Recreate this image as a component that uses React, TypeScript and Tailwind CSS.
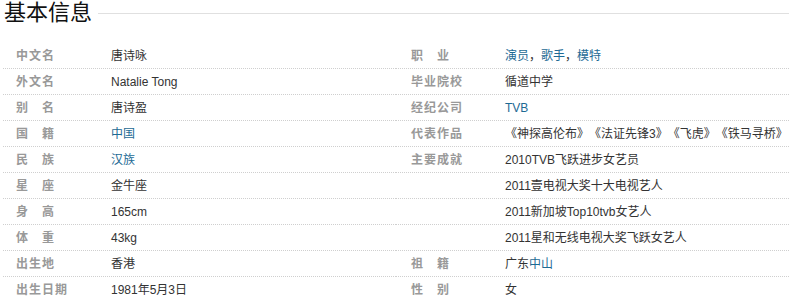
import React from 'react';

interface InfoItem {
  label: string;
  value: React.ReactNode;
}

const Link: React.FC<{ children: React.ReactNode }> = ({ children }) => (
  <a href="#" className="text-[#1d6a94] no-underline">{children}</a>
);

const leftItems: InfoItem[] = [
  { label: '中文名', value: '唐诗咏' },
  { label: '外文名', value: 'Natalie Tong' },
  { label: '别　名', value: '唐诗盈' },
  { label: '国　籍', value: <Link>中国</Link> },
  { label: '民　族', value: <Link>汉族</Link> },
  { label: '星　座', value: '金牛座' },
  { label: '身　高', value: '165cm' },
  { label: '体　重', value: '43kg' },
  { label: '出生地', value: '香港' },
  { label: '出生日期', value: '1981年5月3日' }
];

const rightItems: InfoItem[] = [
  {
    label: '职　业',
    value: (
      <>
        <Link>演员</Link>，<Link>歌手</Link>，<Link>模特</Link>
      </>
    )
  },
  { label: '毕业院校', value: '循道中学' },
  { label: '经纪公司', value: <Link>TVB</Link> },
  { label: '代表作品', value: '《神探高伦布》《法证先锋3》《飞虎》《铁马寻桥》' },
  { label: '主要成就', value: '2010TVB飞跃进步女艺员' },
  { label: '', value: '2011壹电视大奖十大电视艺人' },
  { label: '', value: '2011新加坡Top10tvb女艺人' },
  { label: '', value: '2011星和无线电视大奖飞跃女艺人' },
  { label: '祖　籍', value: <>广东<Link>中山</Link></> },
  { label: '性　别', value: '女' }
];

const InfoColumn: React.FC<{ items: InfoItem[]; labelPad: string; labelWidth: string }> = ({
  items,
  labelPad,
  labelWidth
}) => (
  <dl className="w-[393px] shrink-0">
    {items.map((item, i) => (
      <div
        key={i}
        className="flex h-[26px] items-center border-b border-dotted border-[#cfcfcf] text-[12px] whitespace-nowrap"
      >
        <dt className={`${labelPad} ${labelWidth} shrink-0 font-bold tracking-[1px] text-[#999]`}>
          {item.label}
        </dt>
        <dd className="text-[#333]">{item.value}</dd>
      </div>
    ))}
  </dl>
);

export default function App() {
  return (
    <div
      className="w-[789px] h-[301px] overflow-hidden bg-white [text-spacing-trim:space-all]"
      style={{ fontFamily: '"Liberation Sans", "Noto Sans CJK SC", sans-serif' }}
    >
      {/* Section title */}
      <div className="flex h-[26px] items-center pl-[4px]">
        <h2 className="text-[22px] leading-[26px] font-normal text-[#111]">基本信息</h2>
        <div className="ml-[6px] h-px flex-1 bg-[#e0e0e0]" />
      </div>

      <div className="mt-[17px] flex pl-[3px]">
        <InfoColumn items={leftItems} labelPad="pl-[13px]" labelWidth="w-[108px]" />
        <InfoColumn items={rightItems} labelPad="pl-[15px]" labelWidth="w-[109px]" />
      </div>
    </div>
  );
}
